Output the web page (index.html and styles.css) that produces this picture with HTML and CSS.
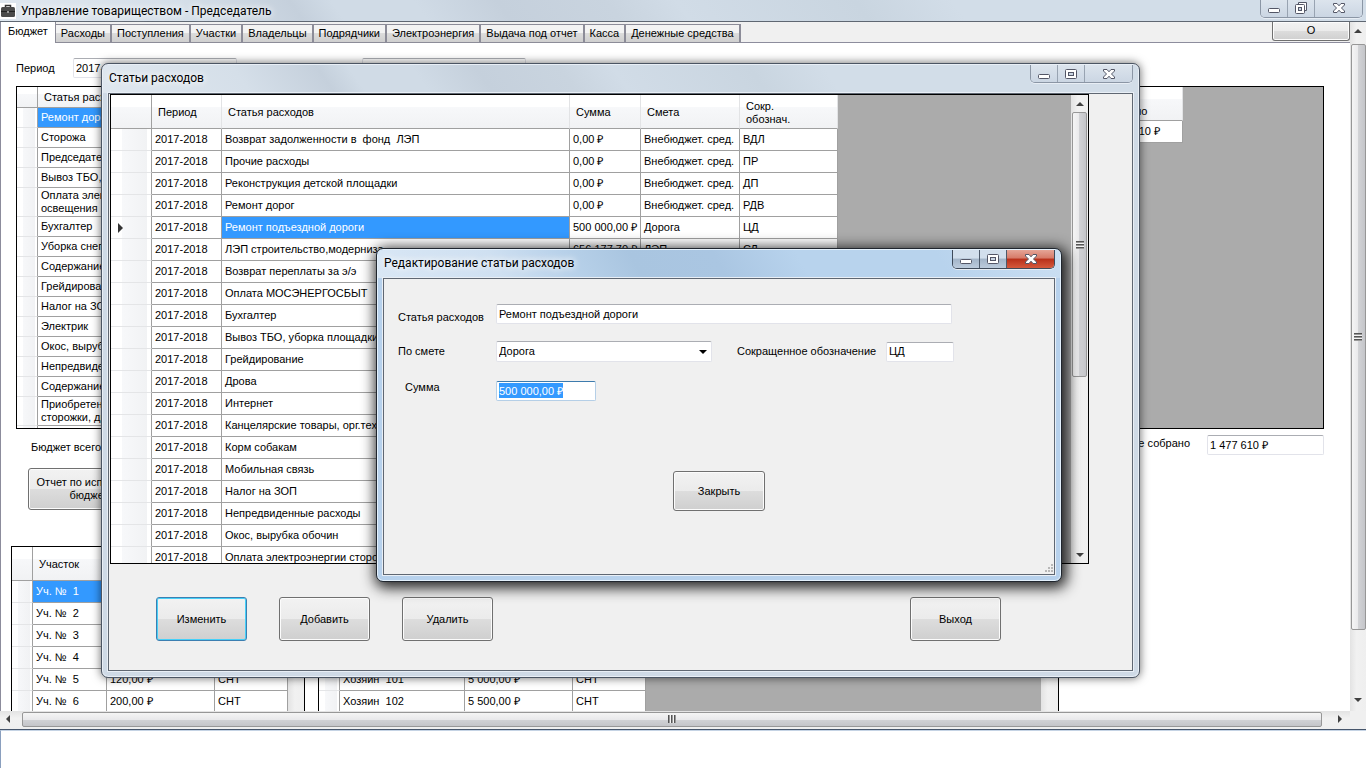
FILE: index.html
```html
<!DOCTYPE html>
<html lang="ru">
<head>
    <meta charset="UTF-8">
    <meta name="viewport" content="width=device-width, initial-scale=1.0">
    <title>Управление товариществом - Председатель</title>
    <link rel="stylesheet" href="styles.css">
</head>
<body>
    <svg class="sprite" aria-hidden="true">
        <symbol id="icon-min" viewBox="0 0 14 12">
            <rect x="1.5" y="6.5" width="11" height="4" rx="1" fill="#fff" stroke="#535666"/>
        </symbol>
        <symbol id="icon-max" viewBox="0 0 14 12">
            <rect x="1.5" y="1.5" width="11" height="9" rx="1" fill="#fff" stroke="#535666"/>
            <rect x="4.5" y="4.5" width="5" height="3" fill="#c9d4e2" stroke="#535666"/>
        </symbol>
        <symbol id="icon-restore" viewBox="0 0 14 12">
            <path d="M4.5 2.5V.5H12.5V8.5H10.5" fill="#fff" stroke="#535666"/>
            <rect x="1.5" y="2.5" width="9" height="9" rx="1" fill="#fff" stroke="#535666"/>
            <rect x="4.5" y="5.5" width="3" height="3" fill="#c9d4e2" stroke="#535666"/>
        </symbol>
        <symbol id="icon-close" viewBox="0 0 14 12">
            <path d="M1.5 1.5H5L7 3.8L9 1.5H12.5V3L9.5 6L12.5 9V10.5H9L7 8.2L5 10.5H1.5V9L4.5 6L1.5 3Z" fill="#fff" stroke="#535666"/>
        </symbol>
    </svg>

    <div class="desktop">
        <div class="app">
            <div class="titlebar">
                <svg class="app-icon" viewBox="0 0 16 16">
                    <rect width="16" height="16" fill="#fff"/>
                    <path d="M5.5 4V2.5H10.5V4" fill="none" stroke="#333" stroke-width="1.5"/>
                    <rect x="1" y="4" width="14" height="10" rx="1.5" fill="#4a4a4a"/>
                    <path d="M1 8.5H15" stroke="#222"/>
                    <rect x="7" y="8" width="2" height="2" fill="#999"/>
                </svg>
                <span class="title">Управление товариществом - Председатель</span>
                <div class="controls">
                    <button aria-label="Свернуть"><svg><use href="#icon-min"/></svg></button>
                    <button aria-label="Восстановить"><svg><use href="#icon-restore"/></svg></button>
                    <button class="close" aria-label="Закрыть"><svg><use href="#icon-close"/></svg></button>
                </div>
            </div>
            <div class="app-client">
                <div class="app-view">
                    <div class="tabs">
                        <button class="tab active">Бюджет</button>
                        <button class="tab">Расходы</button>
                        <button class="tab">Поступления</button>
                        <button class="tab">Участки</button>
                        <button class="tab">Владельцы</button>
                        <button class="tab">Подрядчики</button>
                        <button class="tab">Электроэнергия</button>
                        <button class="tab">Выдача под отчет</button>
                        <button class="tab">Касса</button>
                        <button class="tab">Денежные средства</button>
                        <button class="btn about">О</button>
                    </div>
                    <div class="page">
                        <div class="filters">
                            <label for="period">Период</label>
                            <input class="field" id="period" value="2017-2018">
                            <input class="field" aria-label="Фильтр">
                        </div>
                        <div class="budget">
                            <div class="grid budget-grid">
                                <table class="short-rows">
                                    <colgroup><col class="c-mark"><col></colgroup>
                                    <thead><tr><th></th><th>Статья расходов</th></tr></thead>
                                    <tbody>
                                        <tr><th></th><td class="selected">Ремонт дорог</td></tr>
                                        <tr><th></th><td>Сторожа</td></tr>
                                        <tr><th></th><td>Председатель</td></tr>
                                        <tr><th></th><td>Вывоз ТБО, уборка</td></tr>
                                        <tr class="double"><th></th><td>Оплата электроэнергии<br>освещения</td></tr>
                                        <tr><th></th><td>Бухгалтер</td></tr>
                                        <tr><th></th><td>Уборка снега</td></tr>
                                        <tr><th></th><td>Содержание</td></tr>
                                        <tr><th></th><td>Грейдирование</td></tr>
                                        <tr><th></th><td>Налог на ЗОП</td></tr>
                                        <tr><th></th><td>Электрик</td></tr>
                                        <tr><th></th><td>Окос, вырубка</td></tr>
                                        <tr><th></th><td>Непредвиденные</td></tr>
                                        <tr><th></th><td>Содержание</td></tr>
                                        <tr class="double"><th></th><td>Приобретение<br>сторожки, дрова</td></tr>
                                        <tr><th></th><td></td></tr>
                                    </tbody>
                                </table>
                            </div>
                            <div class="grid total-grid">
                                <table>
                                    <colgroup><col><col class="c-total"></colgroup>
                                    <thead><tr><th></th><th>Всего<br>собрано</th></tr></thead>
                                    <tbody><tr><td></td><td>1 477 610 ₽</td></tr></tbody>
                                </table>
                            </div>
                        </div>
                        <div class="totals">
                            <span>Бюджет всего</span>
                            <label for="collected">Уже собрано</label>
                            <input class="field" id="collected" value="1 477 610 ₽">
                        </div>
                        <button class="btn report">Отчет по исполнению бюджета</button>
                        <div class="lists">
                            <div class="grid plots">
                                <table>
                                    <colgroup><col class="c-mark"><col class="c-plot"><col class="c-money"><col class="c-kind"></colgroup>
                                    <thead><tr><th></th><th>Участок</th><th>Сумма</th><th>Смета</th></tr></thead>
                                    <tbody>
                                        <tr><th></th><td class="selected">Уч. №  1</td><td></td><td></td></tr>
                                        <tr><th></th><td>Уч. №  2</td><td></td><td></td></tr>
                                        <tr><th></th><td>Уч. №  3</td><td></td><td></td></tr>
                                        <tr><th></th><td>Уч. №  4</td><td></td><td></td></tr>
                                        <tr><th></th><td>Уч. №  5</td><td>120,00 ₽</td><td>СНТ</td></tr>
                                        <tr><th></th><td>Уч. №  6</td><td>200,00 ₽</td><td>СНТ</td></tr>
                                    </tbody>
                                </table>
                                <div class="scroll-v"></div>
                            </div>
                            <div class="grid owners">
                                <table>
                                    <colgroup><col class="c-mark"><col class="c-owner"><col class="c-money"><col class="c-kind"></colgroup>
                                    <thead><tr><th></th><th>Владелец</th><th>Сумма</th><th>Смета</th></tr></thead>
                                    <tbody>
                                        <tr><th></th><td></td><td></td><td></td></tr>
                                        <tr><th></th><td></td><td></td><td></td></tr>
                                        <tr><th></th><td></td><td></td><td></td></tr>
                                        <tr><th></th><td></td><td></td><td></td></tr>
                                        <tr><th></th><td>Хозяин  101</td><td>5 000,00 ₽</td><td>СНТ</td></tr>
                                        <tr><th></th><td>Хозяин  102</td><td>5 500,00 ₽</td><td>СНТ</td></tr>
                                    </tbody>
                                </table>
                                <div class="scroll-v"></div>
                            </div>
                        </div>
                    </div>
                </div>
                <div class="scroll-v">
                    <button class="arrow up" aria-label="Вверх"></button>
                    <div class="thumb page-thumb"></div>
                    <button class="arrow down" aria-label="Вниз"></button>
                </div>
                <div class="scroll-h">
                    <button class="arrow left" aria-label="Влево"></button>
                    <div class="thumb"></div>
                    <button class="arrow right" aria-label="Вправо"></button>
                </div>
            </div>
        </div>
        <div class="under"></div>

        <div class="window articles">
            <div class="titlebar">
                <span class="title">Статьи расходов</span>
                <div class="controls">
                    <button aria-label="Свернуть"><svg><use href="#icon-min"/></svg></button>
                    <button aria-label="Развернуть"><svg><use href="#icon-max"/></svg></button>
                    <button class="close" aria-label="Закрыть"><svg><use href="#icon-close"/></svg></button>
                </div>
            </div>
            <div class="client">
                <div class="grid articles-grid">
                    <table>
                        <colgroup><col class="c-head"><col class="c-period"><col class="c-name"><col class="c-sum"><col class="c-est"><col class="c-short"></colgroup>
                        <thead><tr><th></th><th>Период</th><th>Статья расходов</th><th>Сумма</th><th>Смета</th><th>Сокр.<br>обознач.</th></tr></thead>
                        <tbody>
                            <tr><th></th><td>2017-2018</td><td>Возврат задолженности в  фонд  ЛЭП</td><td>0,00 ₽</td><td>Внебюджет. сред.</td><td>ВДЛ</td></tr>
                            <tr><th></th><td>2017-2018</td><td>Прочие расходы</td><td>0,00 ₽</td><td>Внебюджет. сред.</td><td>ПР</td></tr>
                            <tr><th></th><td>2017-2018</td><td>Реконструкция детской площадки</td><td>0,00 ₽</td><td>Внебюджет. сред.</td><td>ДП</td></tr>
                            <tr><th></th><td>2017-2018</td><td>Ремонт дорог</td><td>0,00 ₽</td><td>Внебюджет. сред.</td><td>РДВ</td></tr>
                            <tr><th class="current"></th><td>2017-2018</td><td class="selected">Ремонт подъездной дороги</td><td>500 000,00 ₽</td><td>Дорога</td><td>ЦД</td></tr>
                            <tr><th></th><td>2017-2018</td><td>ЛЭП строительство,модерниза</td><td>656 177,70 ₽</td><td>ЛЭП</td><td>СЛ</td></tr>
                            <tr><th></th><td>2017-2018</td><td>Возврат переплаты за э/э</td><td></td><td></td><td></td></tr>
                            <tr><th></th><td>2017-2018</td><td>Оплата МОСЭНЕРГОСБЫТ</td><td></td><td></td><td></td></tr>
                            <tr><th></th><td>2017-2018</td><td>Бухгалтер</td><td></td><td></td><td></td></tr>
                            <tr><th></th><td>2017-2018</td><td>Вывоз ТБО, уборка площадки</td><td></td><td></td><td></td></tr>
                            <tr><th></th><td>2017-2018</td><td>Грейдирование</td><td></td><td></td><td></td></tr>
                            <tr><th></th><td>2017-2018</td><td>Дрова</td><td></td><td></td><td></td></tr>
                            <tr><th></th><td>2017-2018</td><td>Интернет</td><td></td><td></td><td></td></tr>
                            <tr><th></th><td>2017-2018</td><td>Канцелярские товары, орг.техника</td><td></td><td></td><td></td></tr>
                            <tr><th></th><td>2017-2018</td><td>Корм собакам</td><td></td><td></td><td></td></tr>
                            <tr><th></th><td>2017-2018</td><td>Мобильная связь</td><td></td><td></td><td></td></tr>
                            <tr><th></th><td>2017-2018</td><td>Налог на ЗОП</td><td></td><td></td><td></td></tr>
                            <tr><th></th><td>2017-2018</td><td>Непредвиденные расходы</td><td></td><td></td><td></td></tr>
                            <tr><th></th><td>2017-2018</td><td>Окос, вырубка обочин</td><td></td><td></td><td></td></tr>
                            <tr><th></th><td>2017-2018</td><td>Оплата электроэнергии сторожки</td><td></td><td></td><td></td></tr>
                        </tbody>
                    </table>
                    <div class="scroll-v">
                        <button class="arrow up" aria-label="Вверх"></button>
                        <div class="thumb articles-thumb"></div>
                        <button class="arrow down" aria-label="Вниз"></button>
                    </div>
                </div>
                <div class="actions">
                    <button class="btn default">Изменить</button>
                    <button class="btn">Добавить</button>
                    <button class="btn">Удалить</button>
                    <button class="btn exit">Выход</button>
                </div>
            </div>
        </div>

        <div class="window editor">
            <div class="titlebar">
                <span class="title">Редактирование статьи расходов</span>
                <div class="controls">
                    <button aria-label="Свернуть"><svg><use href="#icon-min"/></svg></button>
                    <button aria-label="Развернуть"><svg><use href="#icon-max"/></svg></button>
                    <button class="close" aria-label="Закрыть"><svg><use href="#icon-close"/></svg></button>
                </div>
            </div>
            <form class="client">
                <div class="form-row low">
                    <label for="article">Статья расходов</label>
                    <input class="field wide" id="article" value="Ремонт подъездной дороги">
                </div>
                <div class="form-row">
                    <label for="estimate">По смете</label>
                    <select class="field" id="estimate"><option>Дорога</option><option>ЛЭП</option></select>
                    <label class="second" for="short">Сокращенное обозначение</label>
                    <input class="field short" id="short" value="ЦД">
                </div>
                <div class="form-row high">
                    <label class="indent" for="sum">Сумма</label>
                    <input class="field sum" id="sum" value="500 000,00 ₽">
                </div>
                <button class="btn" type="button">Закрыть</button>
                <svg class="grip" viewBox="0 0 9 9" fill="#b8b8b8">
                    <path d="M7 0h2v2h-2zM7 3h2v2h-2zM4 3h2v2h-2zM7 6h2v2h-2zM4 6h2v2h-2zM1 6h2v2h-2z"/>
                </svg>
            </form>
        </div>
    </div>

    <script>
        document.getElementById('sum').select();
    </script>
</body>
</html>
```
FILE: styles.css
```css
* {
    box-sizing: border-box;
}
body {
    margin: 0;
    font-family: "Liberation Sans", Arial, sans-serif;
    font-size: 11px;
    line-height: 13px;
    color: #000;
    background-color: #fff;
}
button, input, select {
    font: inherit;
    color: inherit;
    margin: 0;
}
.sprite {
    display: none;
}
.desktop {
    position: relative;
    display: flex;
    flex-direction: column;
    height: 100vh;
    overflow: hidden;
}

/* main window */
.app {
    flex: 1;
    min-height: 0;
    display: flex;
    flex-direction: column;
    border-bottom: 1px solid #46556b;
}
.under {
    height: 38px;
    border-top: 1px solid #c5d3e4;
    border-left: 1px solid #8a9fbe;
}
.titlebar {
    display: flex;
    align-items: center;
    background: linear-gradient(55deg, #dfe7ef 0, #d5dfe9 14%, #c5d0dc 22%, #d0dbe6 25%, #d0dbe6 31%, #c5d0dc 37%, #c9d4df 45%, #d1dce7 50%, #c9d5e0 63%, #d2dde8 70%, #d2dde8 100%);
}
.title {
    font-family: Roboto, "Open Sans", sans-serif;
    font-size: 12px;
    line-height: 16px;
    white-space: nowrap;
    text-shadow: 0 0 6px #fff, 0 0 10px #fff;
}
.app > .titlebar {
    height: 22px;
    padding: 0 3px 0 0;
    border-bottom: 1px solid #5f6772;
}
.app-icon {
    width: 16px;
    height: 16px;
    margin-right: 5px;
}
.controls {
    display: flex;
    align-self: flex-start;
    margin-left: auto;
    height: 18px;
    border: 1px solid #8b96a5;
    border-top: 0;
    border-radius: 0 0 5px 5px;
    overflow: hidden;
    box-shadow: 0 1px 0 #e8eef5;
}
.controls button {
    display: flex;
    align-items: center;
    justify-content: center;
    width: 27px;
    padding: 0;
    border: 0;
    border-right: 1px solid #98a3b1;
    background: linear-gradient(#dce4ed, #cbd6e3);
}
.controls .close {
    width: 47px;
    border-right: 0;
}
.controls svg {
    width: 14px;
    height: 12px;
}
.app > .titlebar .controls button {
    padding-bottom: 2px;
}
.app-client {
    flex: 1;
    min-height: 0;
    display: grid;
    grid-template-columns: minmax(0, 1fr) 16px;
    grid-template-rows: minmax(0, 1fr) 18px;
    background-color: #f0f0f0;
}
.app-view {
    display: flex;
    flex-direction: column;
    min-height: 0;
    overflow: hidden;
    border-left: 1px solid #8c8c9c;
    background-color: #fff;
}
.tabs {
    flex: none;
    display: flex;
    align-items: flex-end;
    height: 21px;
    background-color: #f0f0f0;
    border-bottom: 1px solid #8d8d9d;
}
.tab {
    height: 19px;
    padding: 0 5px;
    margin-bottom: -1px;
    border: 1px solid #8c8c98;
    border-left-width: 0;
    border-right-width: 2px;
    background: linear-gradient(#f3f3f3 50%, #dcdcdc 50%, #cfcfcf);
    white-space: nowrap;
}
.tab.active {
    height: 22px;
    padding: 0 7px 2px;
    border-width: 0 1px 0 0;
    background: #fff;
}
.btn {
    padding: 0 6px;
    border: 1px solid #707070;
    border-radius: 3px;
    background: linear-gradient(#f2f2f2, #ebebeb 50%, #dddddd 50%, #cfcfcf);
    box-shadow: inset 0 0 0 1px #fcfcfc;
}
.about {
    align-self: flex-start;
    width: 78px;
    height: 19px;
    padding-bottom: 2px;
    margin-left: auto;
    border-top: 0;
    border-radius: 0 0 3px 3px;
}

/* scrollbars */
.scroll-v {
    flex: none;
    display: flex;
    flex-direction: column;
    align-items: center;
    width: 17px;
    background: linear-gradient(90deg, #e3e3e3, #f1f1f1 40%, #efefef);
}
.app-client > .scroll-v {
    width: 16px;
}
.scroll-h {
    display: flex;
    align-items: center;
    padding-bottom: 2px;
    background: linear-gradient(#e3e3e3, #f1f1f1 40%, #efefef);
}
.thumb {
    display: flex;
    align-items: center;
    justify-content: center;
    border: 1px solid #979797;
    border-radius: 2px;
}
.scroll-v .thumb {
    width: 15px;
    background: linear-gradient(90deg, #f5f5f5, #e9e9eb 50%, #d2d3d6 50%, #c4c5c9);
}
.scroll-h .thumb {
    flex: 1;
    height: 15px;
    background: linear-gradient(#f5f5f5, #e9e9eb 50%, #d2d3d6 50%, #c4c5c9);
}
.thumb::after {
    content: "";
    width: 8px;
    height: 8px;
    background: repeating-linear-gradient(#555 0 1px, #999 1px 2px, #f4f4f4 2px 3px);
}
.scroll-h .thumb::after {
    background: repeating-linear-gradient(90deg, #555 0 1px, #999 1px 2px, #f4f4f4 2px 3px);
}
.page-thumb {
    height: 85%;
}
.articles-thumb {
    height: 265px;
}
.arrow {
    display: flex;
    align-items: center;
    justify-content: center;
    width: 16px;
    height: 17px;
    padding: 0;
    border: 0;
    background: none;
}
.scroll-v .arrow {
    height: 22px;
}
.app-client > .scroll-v .up {
    padding-bottom: 4px;
}
.grid .scroll-v .arrow {
    height: 17px;
}
.arrow::before {
    content: "";
    border: 4px solid transparent;
}
.up::before {
    border-top-width: 0;
    border-bottom-color: #404040;
}
.down {
    margin-top: auto;
}
.down::before {
    border-bottom-width: 0;
    border-top-color: #404040;
}
.left {
    width: 22px;
    padding-right: 6px;
}
.left::before {
    border-left-width: 0;
    border-right-color: #404040;
}
.right {
    width: 28px;
    padding-left: 8px;
}
.right::before {
    border-right-width: 0;
    border-left-color: #404040;
}

/* data grids */
.grid {
    display: flex;
    border: 1px solid #000;
    background-color: #ababab;
    overflow: hidden;
}
.grid > .scroll-v {
    margin-left: auto;
}
table {
    align-self: flex-start;
    flex: none;
    table-layout: fixed;
    width: 1px;
    border-collapse: separate;
    border-spacing: 0;
    background-color: #fff;
    white-space: pre;
}
th, td {
    height: 22px;
    padding: 0 3px;
    border: 0 solid #a0a0a0;
    border-width: 0 1px 1px 0;
    text-align: left;
    font-weight: normal;
    overflow: hidden;
}
thead th {
    height: 34px;
    padding: 2px 6px 0;
    border-right-color: #e2e3e5;
    background: linear-gradient(#fff 35%, #f7f8fa 35%, #f1f2f4);
}
thead th:first-child,
tbody th {
    border-right-color: #a0a0a0;
}
tbody th {
    border-bottom-color: #e4e5e7;
    background: linear-gradient(90deg, #fff 28%, #f7f8fa 28%, #f1f2f4 90%, #fff 90%);
}
.current::after {
    content: "";
    display: block;
    margin-left: 4px;
    width: 0;
    border: 5px solid transparent;
    border-left-color: #333;
    border-right-width: 0;
}
.selected {
    background-color: #3399ff;
    color: #fff;
}
.short-rows th, .short-rows td {
    height: 20px;
}
.short-rows thead th {
    height: 21px;
    padding-top: 0;
}
.short-rows .double td {
    height: 29px;
}
.c-mark { width: 21px; }
.c-plot { width: 74px; }
.c-money { width: 108px; }
.c-kind { width: 73px; }
.c-owner { width: 125px; }
.c-total { width: 84px; }
.c-head { width: 41px; }
.c-period { width: 70px; }
.c-name { width: 348px; }
.c-sum { width: 71px; }
.c-est { width: 99px; }
.c-short { width: 98px; }

/* budget page */
.page {
    flex: 1;
    padding: 15px 26px 0 15px;
}
.filters {
    display: flex;
    align-items: center;
    height: 20px;
    margin-bottom: 8px;
}
.filters label {
    width: 57px;
}
.filters .field {
    width: 164px;
    margin-right: 125px;
}
.field {
    height: 20px;
    padding: 0 2px 1px;
    border: 1px solid #e2e3ea;
    border-top-color: #abadb3;
    border-radius: 2px;
    background-color: #fff;
    outline: 0;
}
.budget {
    display: grid;
    grid-template-columns: 1fr 1fr;
    gap: 40px;
    height: 343px;
    margin-bottom: 6px;
}
.budget-grid table {
    width: 100%;
}
.total-grid table {
    width: calc(100% - 140px);
}
.totals {
    display: flex;
    align-items: center;
    height: 20px;
}
.totals span {
    margin: 4px auto 0 15px;
}
.totals label {
    margin: 0 17px 4px 0;
}
.totals .field {
    width: 117px;
}
.report {
    display: block;
    width: 128px;
    height: 42px;
    margin: 13px 0 36px 12px;
}
.lists {
    display: flex;
    gap: 13px;
    margin-left: -5px;
}
.lists .grid {
    height: 230px;
}
.plots {
    width: 294px;
}
.owners {
    width: 741px;
}

/* child windows */
.window {
    position: absolute;
    display: flex;
    flex-direction: column;
    padding: 0 6px 6px;
    border: 1px solid #4b5563;
    border-radius: 7px;
    background-color: #cfdae6;
    box-shadow: inset 0 0 0 1px #e9eff6, 0 0 10px rgba(0, 0, 0, 0.6);
}
.window .titlebar {
    height: 28px;
    margin: 1px -5px 0;
    padding: 0 5px 2px 6px;
    border-radius: 5px 5px 0 0;
}
.client {
    flex: 1;
    min-height: 0;
    border: 1px solid #5f6772;
    background-color: #f0f0f0;
    box-shadow: 0 0 0 1px #e9eff6;
}
.articles {
    left: 101px;
    top: 63px;
    width: 1039px;
    height: 615px;
}
.articles-grid {
    width: 979px;
    height: 470px;
    margin: 0 1px 33px;
}
.actions {
    display: flex;
    gap: 32px;
    padding: 0 131px 0 47px;
}
.actions .btn {
    width: 91px;
    height: 44px;
}
.actions .exit {
    margin-left: auto;
}
.actions .default {
    border-color: #3c7fb1;
    box-shadow: inset 0 0 0 1px #46d0f8;
}
.editor {
    left: 376px;
    top: 248px;
    width: 686px;
    height: 334px;
    border-color: #20262e;
    background-color: #b7d1ec;
    box-shadow: inset 0 0 0 1px #e4f1fc, 2px 3px 14px 3px rgba(0, 0, 0, 0.85);
}
.editor .titlebar {
    background: linear-gradient(60deg, #d9e7f5 0, #cfe0f1 18%, #b9d2ea 28%, #a9c5e0 38%, #aac6e2 50%, #b8d3ed 62%, #b8d3ed 82%, #cbdff2 100%);
}
.editor .controls {
    height: 19px;
    border-color: #3f4b5a;
}
.editor .controls button {
    border-right-color: #4d5a6a;
    background: linear-gradient(#d2dfec 45%, #a3b5c8 50%, #bccbdc);
}
.editor .controls .close {
    background: linear-gradient(#e5a597, #d67a68 45%, #b8301a 50%, #d5593c);
}
.editor .client {
    position: relative;
    padding: 25px 14px;
}
.form-row {
    display: flex;
    align-items: center;
}
.form-row label {
    width: 98px;
    white-space: nowrap;
}
.form-row.low {
    align-items: flex-end;
    margin-bottom: 17px;
}
.form-row.high {
    align-items: flex-start;
    margin-top: 19px;
}
.form-row .indent {
    padding-left: 7px;
}
.form-row .second {
    width: 149px;
    margin-left: 25px;
}
.wide {
    width: 456px;
}
select.field {
    width: 216px;
    height: 21px;
    appearance: none;
    background: #fff url("data:image/svg+xml,%3Csvg xmlns='http://www.w3.org/2000/svg' viewBox='0 0 8 4'%3E%3Cpath d='M0 0h8L4 4z'/%3E%3C/svg%3E") no-repeat right 4px center / 8px 4px;
}
.short {
    width: 68px;
}
.sum {
    width: 100px;
    border-color: #b5cfe7;
    border-top-color: #3d7bad;
}
.sum::selection {
    background-color: #3399ff;
    color: #fff;
}
.editor .btn {
    display: block;
    width: 92px;
    height: 40px;
    margin: 70px auto 0;
}
.grip {
    position: absolute;
    right: 1px;
    bottom: 1px;
    width: 9px;
    height: 9px;
}
```
